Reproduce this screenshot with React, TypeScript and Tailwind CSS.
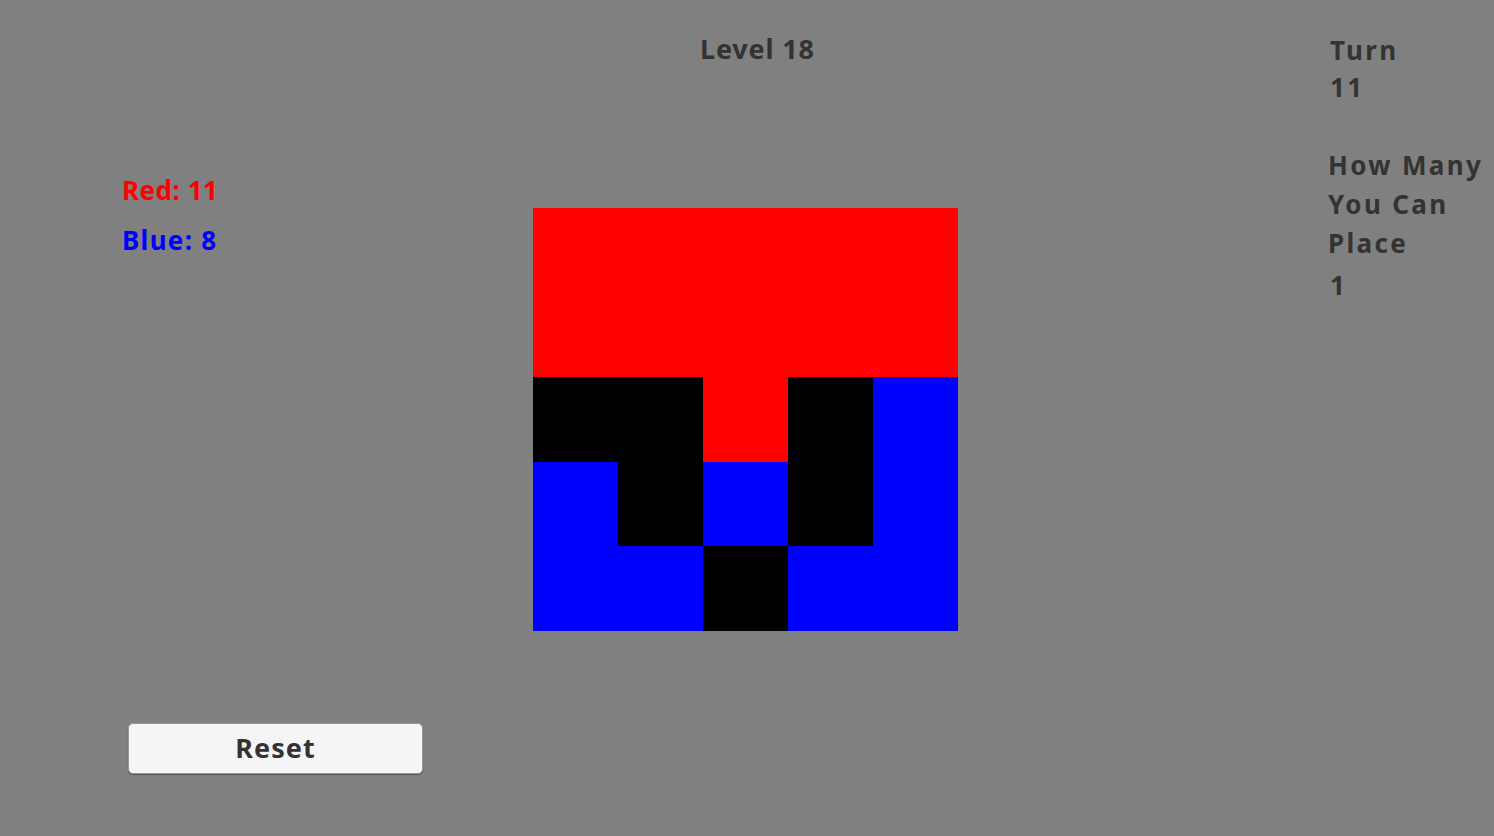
const cells: string[][] = [
  ["r", "r", "r", "r", "r"],
  ["r", "r", "r", "r", "r"],
  ["k", "k", "r", "k", "b"],
  ["b", "k", "b", "k", "b"],
  ["b", "b", "k", "b", "b"],
];

const fill: Record<string, string> = {
  r: "bg-[#ff0000]",
  b: "bg-[#0000ff]",
  k: "bg-black",
};

export default function App() {
  return (
    <div
      className="w-[1494px] h-[836px] bg-[#808080] flex font-bold text-[#333333] overflow-hidden"
      style={{ fontFamily: '"Noto Sans", "Open Sans", sans-serif' }}
    >
      {/* scores + reset */}
      <div className="w-[533px] flex flex-col pl-[122px]">
        <div className="pt-[165px] text-[26px] leading-[50px] tracking-[0.02em]">
          <div className="text-[#ff0000]">Red: 11</div>
          <div className="text-[#0000ff] tracking-[0.05em]">Blue: 8</div>
        </div>
        <button className="mt-auto mb-[62px] ml-[6px] w-[295px] h-[51px] rounded-[5px] bg-[#f5f5f5] border border-[#9a9a9a] shadow-[0_1px_1px_rgba(0,0,0,0.35)] text-[27px] tracking-[0.04em] text-[#333333]">
          Reset
        </button>
      </div>

      {/* board */}
      <div className="w-[425px] flex flex-col">
        <div className="pt-[30px] pl-[167px] text-[27px] leading-[38px] tracking-[0.03em]">
          Level 18
        </div>
        <div className="mt-[140px] w-[425px] h-[423px] grid grid-cols-5 grid-rows-5">
          {cells.flat().map((c, i) => (
            <div key={i} className={fill[c]} />
          ))}
        </div>
      </div>

      {/* turn info */}
      <div className="flex-1 pl-[372px] text-[26px] tracking-[0.09em] whitespace-nowrap">
        <div className="pt-[32px] leading-[37px]">Turn</div>
        <div className="leading-[37px]">11</div>
        <div className="mt-[40px] leading-[39px] -ml-[2px]">
          <div>How Many</div>
          <div>You Can</div>
          <div>Place</div>
        </div>
        <div className="mt-[3px] leading-[39px]">1</div>
      </div>
    </div>
  );
}
